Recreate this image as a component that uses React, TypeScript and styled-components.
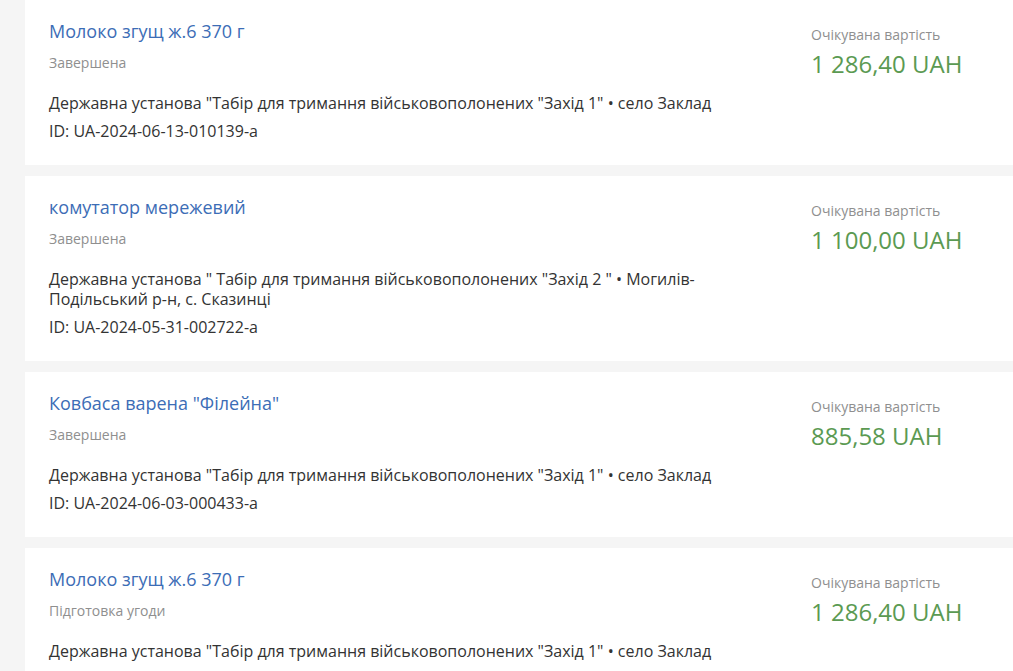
import React from "react";
import styled, { createGlobalStyle } from "styled-components";

const GlobalStyle = createGlobalStyle`
  html, body { margin: 0; padding: 0; background: #f5f5f5; }
  body { font-family: "Open Sans", "Noto Sans", sans-serif; overflow: hidden; }
  * { box-sizing: border-box; }
`;

const Page = styled.div`
  padding: 0 0 0 25px;
  width: 1013px;
  height: 671px;
  overflow: hidden;
`;

const List = styled.div`
  display: flex;
  flex-direction: column;
  gap: 11px;
`;

const Card = styled.div`
  background: #fff;
  display: flex;
  padding: 19px 0 24px 24px;
`;

const Main = styled.div`
  width: 720px;
  flex: none;
  display: flex;
  flex-direction: column;
`;

const Title = styled.a`
  font-size: 18px;
  line-height: 24px;
  color: #3c6db6;
  text-decoration: none;
`;

const Status = styled.div`
  margin-top: 10px;
  font-size: 14px;
  line-height: 20px;
  color: #8f8f8f;
`;

const Buyer = styled.div`
  margin-top: 20px;
  font-size: 16px;
  line-height: 20px;
  color: #333;
  max-width: 700px;
`;

const Id = styled.div`
  margin-top: 8px;
  font-size: 16px;
  line-height: 20px;
  color: #333;
`;

const Side = styled.div`
  margin-left: 42px;
  padding-top: 6px;
  display: flex;
  flex-direction: column;
`;

const Label = styled.div`
  font-size: 14px;
  line-height: 20px;
  color: #8f8f8f;
`;

const Price = styled.div`
  margin-top: 3px;
  font-size: 24px;
  line-height: 32px;
  color: #5b9a52;
`;

type Item = { title: string; status: string; buyer: string; id: string; price: string };

const items: Item[] = [
  {
    title: "Молоко згущ ж.6 370 г",
    status: "Завершена",
    buyer: 'Державна установа "Табір для тримання військовополонених "Захід 1" • село Заклад',
    id: "ID: UA-2024-06-13-010139-a",
    price: "1 286,40 UAH",
  },
  {
    title: "комутатор мережевий",
    status: "Завершена",
    buyer: 'Державна установа " Табір для тримання військовополонених "Захід 2 " • Могилів-Подільський р-н, с. Сказинці',
    id: "ID: UA-2024-05-31-002722-a",
    price: "1 100,00 UAH",
  },
  {
    title: 'Ковбаса варена "Філейна"',
    status: "Завершена",
    buyer: 'Державна установа "Табір для тримання військовополонених "Захід 1" • село Заклад',
    id: "ID: UA-2024-06-03-000433-a",
    price: "885,58 UAH",
  },
  {
    title: "Молоко згущ ж.6 370 г",
    status: "Підготовка угоди",
    buyer: 'Державна установа "Табір для тримання військовополонених "Захід 1" • село Заклад',
    id: "ID: UA-2024-06-13-010139-a",
    price: "1 286,40 UAH",
  },
];

export default function App() {
  return (
    <Page>
      <GlobalStyle />
      <List>
        {items.map((it, i) => (
          <Card key={i}>
            <Main>
              <Title href="#">{it.title}</Title>
              <Status>{it.status}</Status>
              <Buyer>{it.buyer}</Buyer>
              <Id>{it.id}</Id>
            </Main>
            <Side>
              <Label>Очікувана вартість</Label>
              <Price>{it.price}</Price>
            </Side>
          </Card>
        ))}
      </List>
    </Page>
  );
}
